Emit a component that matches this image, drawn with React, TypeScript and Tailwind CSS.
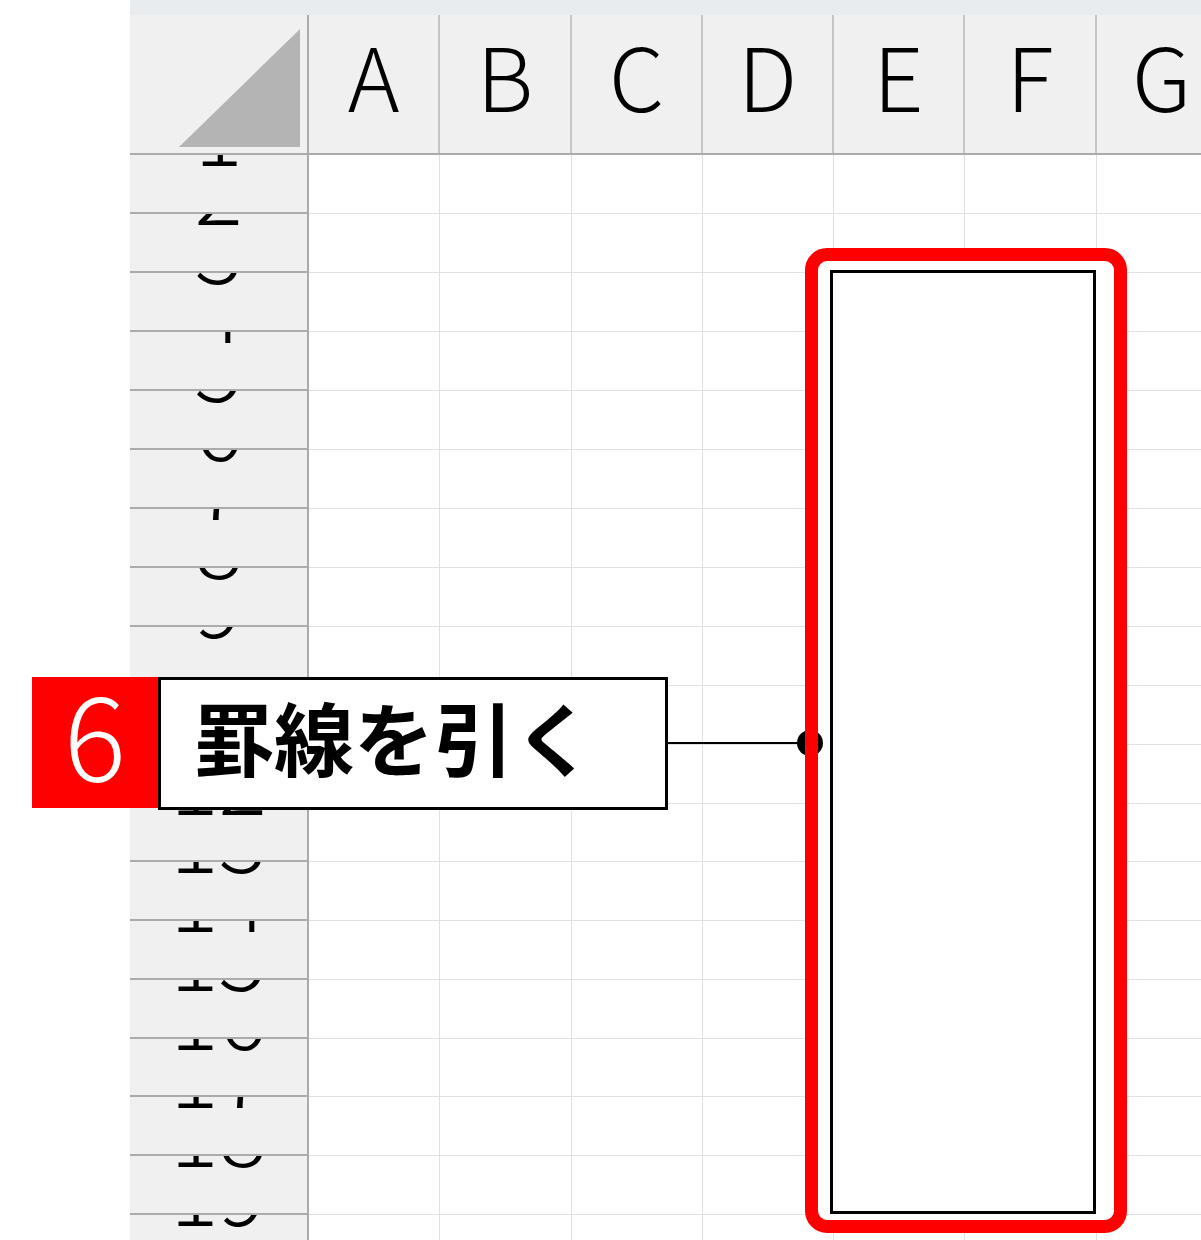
import React from 'react';

const cols = [
  { name: 'A', w: 'w-[131px]' },
  { name: 'B', w: 'w-[132px]' },
  { name: 'C', w: 'w-[131px]' },
  { name: 'D', w: 'w-[131px]' },
  { name: 'E', w: 'w-[131px]' },
  { name: 'F', w: 'w-[132px]' },
  { name: 'G', w: 'w-[131px]' },
];

// row heights as Excel draws them at this zoom
const rows = [59, 59, 59, 59, 59, 59, 59, 59, 59, 59, 59, 58, 59, 59, 59, 58, 59, 59, 59];

function CornerCell() {
  return (
    <div className="w-[179px] h-full shrink-0 border-r-2 border-[#ababab] flex items-end justify-end pr-[7px] pb-[6px]">
      <svg width="121" height="118" viewBox="0 0 121 118">
        <polygon points="121,0 121,118 0,118" fill="#b4b4b4" />
      </svg>
    </div>
  );
}

function RowHeader({ num, h }: { num: number; h: number }) {
  return (
    <div
      className={`relative overflow-hidden w-[179px] shrink-0 bg-[#f0f0f0] border-r-2 border-b-2 border-[#ababab] ${h === 58 ? 'h-[58px]' : 'h-[59px]'}`}
    >
      {/* the numbers are pushed up so only their feet show under each line */}
      <span className="absolute left-0 right-0 top-[-73px] text-center text-[90px] font-light leading-none text-black">
        {num}
      </span>
    </div>
  );
}

function App() {
  return (
    <div className="relative w-[1201px] h-[1240px] overflow-hidden bg-white font-['Noto_Sans_CJK_JP',sans-serif]">
      <div className="ml-[130px] flex flex-col">
        <div className="h-[15px] bg-[#e9ecef]" />

        <div className="flex h-[140px] bg-[#f0f0f0] border-b-2 border-[#ababab]">
          <CornerCell />
          {cols.map((c) => (
            <div
              key={c.name}
              className={`${c.w} shrink-0 h-full border-r-2 border-[#c6c6c6] flex items-center justify-center pb-[20px] text-[88px] font-light leading-none text-black`}
            >
              {c.name}
            </div>
          ))}
        </div>

        {rows.map((h, i) => (
          <div key={i} className="flex">
            <RowHeader num={i + 1} h={h} />
            {cols.map((c) => (
              <div
                key={c.name}
                className={`${c.w} shrink-0 border-r border-b border-[#e1e1e1] ${h === 58 ? 'h-[58px]' : 'h-[59px]'}`}
              />
            ))}
          </div>
        ))}
      </div>

      {/* highlight around E3:F18 */}
      <div className="absolute left-[805px] top-[248px] w-[322px] h-[985px] rounded-[22px] bg-white" />
      <div className="absolute left-[830px] top-[270px] w-[266px] h-[944px] border-[3px] border-black" />
      <div className="absolute left-[666px] top-[742px] w-[140px] h-[2px] bg-black" />
      <div className="absolute left-[797px] top-[730px] w-[26px] h-[26px] rounded-full bg-black" />
      <div className="absolute left-[805px] top-[248px] w-[322px] h-[985px] rounded-[22px] border-[13px] border-[#ff0000]" />

      {/* step callout */}
      <div className="absolute left-[32px] top-[677px] flex">
        <div className="w-[126px] h-[131px] bg-[#ff0000] flex items-center justify-center pb-[26px] text-white text-[116px] font-light leading-none">
          6
        </div>
        <div className="w-[510px] h-[133px] bg-white border-[3px] border-black flex items-center pl-[33px] pb-[18px] text-[80px] font-bold leading-none text-black">
          罫線を引く
        </div>
      </div>
    </div>
  );
}

export default App;
